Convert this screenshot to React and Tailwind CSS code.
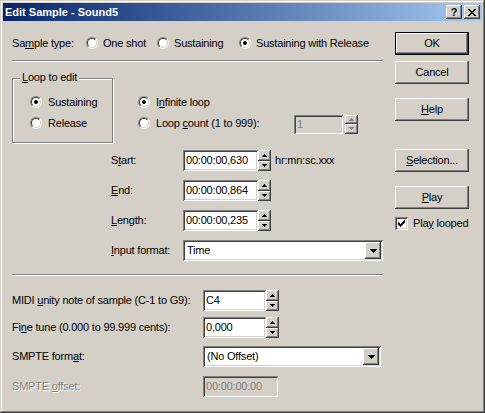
import React from 'react';

const raised = 'shadow-[inset_-1px_-1px_#404040,inset_1px_1px_#ffffff,inset_-2px_-2px_#808080,inset_2px_2px_#d4d0c8]';
const sunken = 'shadow-[inset_1px_1px_#808080,inset_-1px_-1px_#ffffff,inset_2px_2px_#404040,inset_-2px_-2px_#d4d0c8]';

function U({ children }) {
  return <span className="underline underline-offset-[1px]">{children}</span>;
}

function Radio({ checked }) {
  return (
    <span className="inline-flex shrink-0 w-[12px] h-[12px] rounded-full border border-t-[#808080] border-l-[#808080] border-b-white border-r-white">
      <span className="flex flex-1 items-center justify-center rounded-full border border-t-[#404040] border-l-[#404040] border-b-[#d4d0c8] border-r-[#d4d0c8] bg-white">
        {checked && <span className="w-[4px] h-[4px] rounded-full bg-black" />}
      </span>
    </span>
  );
}

function Opt({ className, checked, gap = 'ml-[5px]', children }) {
  return (
    <div className={`flex items-center ${className || ''}`}>
      <Radio checked={checked} />
      <span className={gap}>{children}</span>
    </div>
  );
}

function Arrow({ up, color }) {
  return (
    <svg width="5" height="3" viewBox="0 0 5 3" shapeRendering="crispEdges">
      <path d={up ? 'M2 0h1v1h1v1h1v1H0V2h1V1h1z' : 'M0 0h5v1H4v1H3v1H2V2H1V1H0z'} fill={color} />
    </svg>
  );
}

function Spinner({ disabled }) {
  const c = disabled ? '#808080' : '#000';
  return (
    <div className="flex flex-col w-[13px] h-full">
      <div className={`flex flex-1 items-center justify-center bg-[#d4d0c8] ${raised}`}>
        <Arrow up color={c} />
      </div>
      <div className={`flex flex-1 items-center justify-center bg-[#d4d0c8] ${raised}`}>
        <Arrow color={c} />
      </div>
    </div>
  );
}

function Edit({ className, disabled, children }) {
  return (
    <div
      className={`flex items-center pl-[3px] ${sunken} ${disabled ? 'bg-[#d4d0c8] text-[#808080]' : 'bg-white'} ${className}`}
    >
      {children}
    </div>
  );
}

function Combo({ className, children }) {
  return (
    <div className={`flex items-center h-[21px] p-[2px] bg-white ${sunken} ${className}`}>
      <span className="flex-1 pl-[2px]">{children}</span>
      <div className={`flex items-center justify-center w-[16px] h-[17px] bg-[#d4d0c8] ${raised}`}>
        <svg width="7" height="4" viewBox="0 0 7 4" shapeRendering="crispEdges">
          <path d="M0 0h7v1H6v1H5v1H4v1H3V3H2V2H1V1H0z" fill="#000" />
        </svg>
      </div>
    </div>
  );
}

function Btn({ className, def, children }) {
  return (
    <div
      className={`flex items-center justify-center w-[74px] h-[23px] bg-[#d4d0c8] ${raised} ${
        def ? 'border border-black' : ''
      } ${className}`}
    >
      {children}
    </div>
  );
}

const xPixels = [
  '11....11',
  '.11..11.',
  '..1111..',
  '...11...',
  '..1111..',
  '.11..11.',
  '11....11',
];

function SpinRow({ label, value, className }) {
  return (
    <div className={`flex items-center h-[21px] ${className}`}>
      <span className="w-[72px] ml-[99px]">{label}</span>
      <Edit className="w-[75px] h-full">{value}</Edit>
      <Spinner />
    </div>
  );
}

export default function App() {
  return (
    <div className="w-[485px] h-[413px] p-[3px] bg-[#d4d0c8] text-black text-[11px] leading-none tracking-[-0.2px] font-['Liberation_Sans',Arial,sans-serif] shadow-[inset_-1px_-1px_#404040,inset_1px_1px_#d4d0c8,inset_-2px_-2px_#808080,inset_2px_2px_#ffffff]">
      {/* Title bar */}
      <div className="flex items-center h-[18px] pl-[2px] pr-[2px] bg-linear-to-r from-[#0a246a] to-[#a6caf0]">
        <span className="flex-1 text-white font-bold tracking-normal">Edit Sample - Sound5</span>
        <div className={`flex items-center justify-center w-[16px] h-[14px] mr-[2px] bg-[#d4d0c8] font-bold text-[11px] ${raised}`}>
          ?
        </div>
        <div className={`flex items-center justify-center w-[16px] h-[14px] bg-[#d4d0c8] ${raised}`}>
          <svg width="8" height="7" viewBox="0 0 8 7" shapeRendering="crispEdges">
            {xPixels.map((row, y) =>
              row.split('').map((ch, x) =>
                ch === '1' ? <rect key={`${x}-${y}`} x={x} y={y} width="1" height="1" fill="#000" /> : null
              )
            )}
          </svg>
        </div>
      </div>

      <div className="flex">
        {/* Left column */}
        <div className="flex flex-col w-[371px] ml-[9px]">
          <div className="flex items-center h-[20px] mt-[12px]">
            <span className="w-[74px]">
              Sa<U>m</U>ple type:
            </span>
            <Opt className="w-[71px]">One shot</Opt>
            <Opt className="w-[82px]">Sustaining</Opt>
            <Opt checked>Sustaining with Release</Opt>
          </div>

          <div className="h-[2px] mt-[7px] border-t border-b border-t-[#808080] border-b-white" />

          <div className="flex mt-[16px]">
            <div className="relative w-[101px] h-[65px] border border-[#808080] shadow-[inset_1px_1px_#ffffff,1px_1px_#ffffff]">
              <span className="absolute -top-[7px] left-[7px] px-[2px] bg-[#d4d0c8]">
                <U>L</U>oop to edit
              </span>
              <div className="flex flex-col gap-[1px] pt-[13px] pl-[17px]">
                <Opt className="h-[20px]" checked gap="ml-[6px]">Sustaining</Opt>
                <Opt className="h-[20px]" gap="ml-[6px]">Release</Opt>
              </div>
            </div>
            <div className="flex flex-col gap-[1px] pt-[14px] ml-[25px]">
              <Opt className="h-[20px]" checked gap="ml-[6px]">
                I<U>n</U>finite loop
              </Opt>
              <div className="flex items-center h-[20px]">
                <Opt className="w-[156px]" gap="ml-[6px]">
                  Loop <U>c</U>ount (1 to 999):
                </Opt>
                <Edit disabled className="w-[49px] h-[19px] mt-[2px]">1</Edit>
                <div className="h-[19px] mt-[2px] ml-[2px]">
                  <Spinner disabled />
                </div>
              </div>
            </div>
          </div>

          <div className="flex items-center h-[21px] mt-[7px]">
            <span className="w-[72px] ml-[99px]">
              S<U>t</U>art:
            </span>
            <Edit className="w-[75px] h-full">00:00:00,630</Edit>
            <Spinner />
            <span className="ml-[4px]">hr:mn:sc.xxx</span>
          </div>
          <SpinRow className="mt-[9px]" label={<><U>E</U>nd:</>} value="00:00:00,864" />
          <SpinRow className="mt-[9px]" label={<><U>L</U>ength:</>} value="00:00:00,235" />
          <div className="flex items-center mt-[9px]">
            <span className="w-[72px] ml-[99px]">
              <U>I</U>nput format:
            </span>
            <Combo className="w-[200px]">Time</Combo>
          </div>

          <div className="h-[2px] mt-[13px] border-t border-b border-t-[#808080] border-b-white" />

          <div className="flex items-center h-[21px] mt-[14px]">
            <span className="w-[191px]">
              MIDI <U>u</U>nity note of sample (C-1 to G9):
            </span>
            <Edit className="w-[63px] h-full">C4</Edit>
            <Spinner />
          </div>
          <div className="flex items-center h-[21px] mt-[6px]">
            <span className="w-[191px]">
              Fi<U>n</U>e tune (0.000 to 99.999 cents):
            </span>
            <Edit className="w-[63px] h-full">0,000</Edit>
            <Spinner />
          </div>
          <div className="flex items-center mt-[8px]">
            <span className="w-[191px]">
              SMPTE form<U>a</U>t:
            </span>
            <Combo className="w-[178px]">(No Offset)</Combo>
          </div>
          <div className="flex items-center h-[21px] mt-[9px]">
            <span className="w-[191px] text-[#808080] [text-shadow:1px_1px_0_#ffffff]">
              SMPTE <U>o</U>ffset:
            </span>
            <Edit disabled className="w-[75px] h-full">00:00:00.00</Edit>
          </div>
        </div>

        {/* Right column */}
        <div className="flex flex-col w-[74px] ml-[12px]">
          <Btn def className="mt-[11px]">OK</Btn>
          <Btn className="mt-[6px]">Cancel</Btn>
          <Btn className="mt-[14px]">
            <U>H</U>elp
          </Btn>
          <Btn className="mt-[28px]">
            <U>S</U>election...
          </Btn>
          <Btn className="mt-[14px]">
            <U>P</U>lay
          </Btn>
          <div className="flex items-center mt-[8px]">
            <div className={`w-[13px] h-[13px] bg-white ${sunken}`}>
              <svg width="13" height="13" viewBox="0 0 13 13" shapeRendering="crispEdges">
                <path d="M3 5h1v1h1v1h1V6h1V5h1V4h1V3h1v3H9v1H8v1H7v1H6v1H5V9H4V8H3z" fill="#000" />
              </svg>
            </div>
            <span className="ml-[5px]">
              Pla<U>y</U> looped
            </span>
          </div>
        </div>
      </div>
    </div>
  );
}
